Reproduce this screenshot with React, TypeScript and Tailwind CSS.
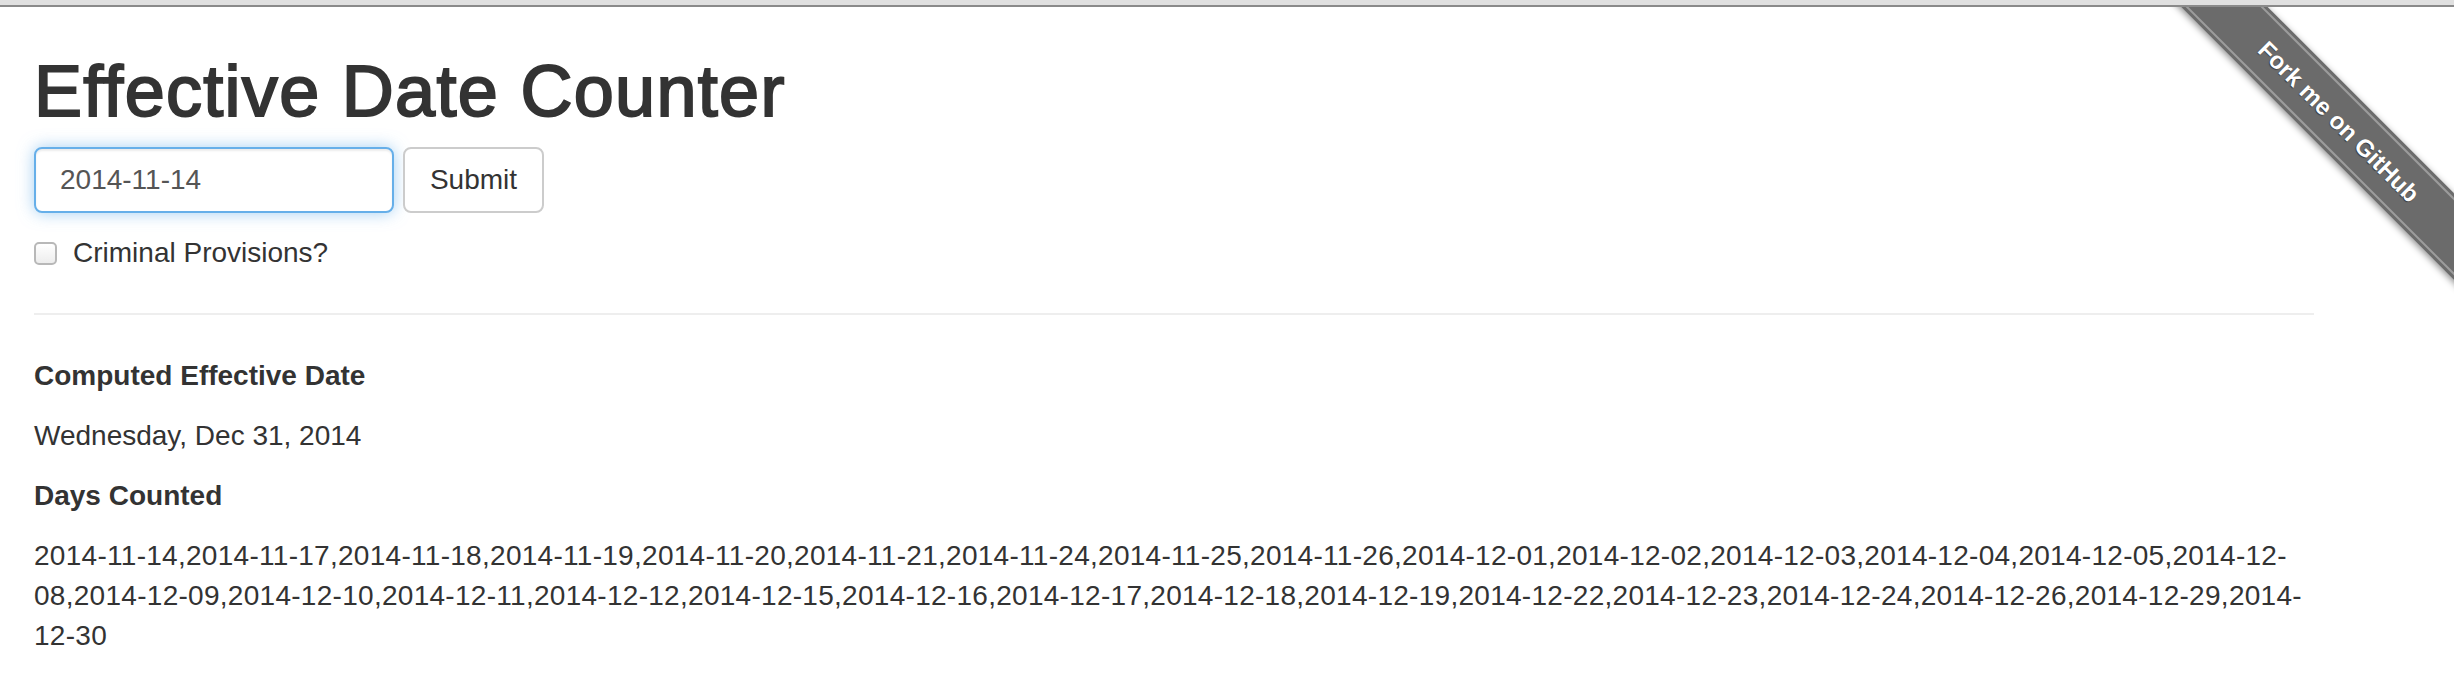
import React, { useState } from 'react';

// Business days counted between the entered date and the effective date
const DAYS = [
  '2014-11-14', '2014-11-17', '2014-11-18', '2014-11-19', '2014-11-20', '2014-11-21',
  '2014-11-24', '2014-11-25', '2014-11-26', '2014-12-01', '2014-12-02', '2014-12-03',
  '2014-12-04', '2014-12-05', '2014-12-08', '2014-12-09', '2014-12-10', '2014-12-11',
  '2014-12-12', '2014-12-15', '2014-12-16', '2014-12-17', '2014-12-18', '2014-12-19',
  '2014-12-22', '2014-12-23', '2014-12-24', '2014-12-26', '2014-12-29', '2014-12-30',
];

// the old page wrapped mid-date (after the hyphen), keep those breaks
const LINE_LEN = 162;

function splitLines(text: string): string[] {
  const out: string[] = [];
  for (let i = 0; i < text.length; i += LINE_LEN) out.push(text.slice(i, i + LINE_LEN));
  return out;
}

function ForkRibbon() {
  return (
    <div className="absolute right-0 top-[7px] w-[298px] h-[298px] overflow-hidden pointer-events-none">
      <a
        href="#"
        className="absolute left-[-27px] top-[84px] w-[420px] h-[61px] rotate-45 bg-[#6b6b6b] shadow-[0_2px_7px_rgba(0,0,0,0.45)] flex items-center justify-center"
      >
        <span className="absolute inset-x-0 top-[3px] h-[2px] bg-[#9c9c9c]" />
        <span className="absolute inset-x-0 bottom-[3px] h-[2px] bg-[#9c9c9c]" />
        <span className="text-white font-bold text-[24px] leading-none [text-shadow:0_1px_1px_rgba(0,0,0,0.5)]">
          Fork me on GitHub
        </span>
      </a>
    </div>
  );
}

export default function App() {
  const [date, setDate] = useState('2014-11-14');
  const [criminal, setCriminal] = useState(false);
  const lines = splitLines(DAYS.join(','));

  return (
    <div className="relative min-h-screen bg-white text-[#333] font-['Liberation_Sans',Arial,sans-serif]">
      {/* browser chrome edge */}
      <div className="h-[7px] bg-[#e0e0e0] border-b-2 border-[#8a8a8a]" />

      <ForkRibbon />

      <div className="ml-[34px] w-[2280px]">
        <h1 className="mt-[44px] text-[72px] leading-[80px] tracking-[1.3px] text-[#333] [-webkit-text-stroke:2px_#333]">
          Effective Date Counter
        </h1>

        <form className="mt-[16px] flex gap-[9px]" onSubmit={e => e.preventDefault()}>
          <input
            value={date}
            onChange={e => setDate(e.target.value)}
            className="w-[360px] h-[66px] px-[24px] text-[28px] text-[#555] bg-white border-2 border-[#66afe9] rounded-[8px] outline-none shadow-[inset_0_2px_2px_rgba(0,0,0,0.075),0_0_16px_rgba(102,175,233,0.6)]"
          />
          <button
            type="submit"
            className="w-[141px] h-[66px] text-[28px] text-[#333] bg-white border-2 border-[#ccc] rounded-[8px]"
          >
            Submit
          </button>
        </form>

        <label className="mt-[20px] flex items-center gap-[16px] h-[40px] text-[28px] leading-[40px]">
          <input
            type="checkbox"
            checked={criminal}
            onChange={() => setCriminal(v => !v)}
            className="appearance-none w-[23px] h-[23px] rounded-[5px] border-2 border-[#b8b8b8] bg-gradient-to-b from-white to-[#ededed]"
          />
          Criminal Provisions?
        </label>

        <hr className="mt-[40px] border-t-2 border-[#eee]" />

        <div className="mt-[41px] text-[28px] leading-[40px]">
          <p className="mb-[20px] font-bold">Computed Effective Date</p>
          <p className="mb-[20px]">Wednesday, Dec 31, 2014</p>
          <p className="mb-[20px] font-bold">Days Counted</p>
          <p className="mb-[20px] tracking-[0.28px]">
            {lines.map((l, i) => (
              <span key={i} className="block whitespace-nowrap">{l}</span>
            ))}
          </p>
        </div>
      </div>
    </div>
  );
}
